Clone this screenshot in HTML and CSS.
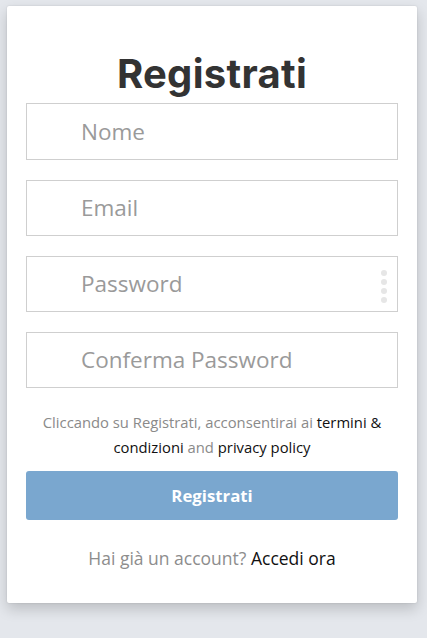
FILE: index.html
```html
<!DOCTYPE html>
<html lang="it">
<head>
<meta charset="utf-8">
<link rel="stylesheet" href="styles.css">
</head>
<body>
<div class="card">
  <h1 class="title">Registrati</h1>
  <form class="form">
    <div class="field"><input class="input" type="text" placeholder="Nome"></div>
    <div class="field"><input class="input" type="text" placeholder="Email"></div>
    <div class="field">
      <input class="input" type="password" placeholder="Password">
      <span class="dots"><i></i><i></i><i></i><i></i></span>
    </div>
    <div class="field"><input class="input" type="password" placeholder="Conferma Password"></div>
    <p class="terms">Cliccando su Registrati, acconsentirai ai <a href="#">termini &amp; condizioni</a> and <a href="#">privacy policy</a></p>
    <button class="btn" type="button">Registrati</button>
  </form>
  <p class="login">Hai già un account? <a href="#">Accedi ora</a></p>
</div>
</body>
</html>
```
FILE: styles.css
```css
* { box-sizing: border-box; }
html, body { margin: 0; padding: 0; }
body {
  background: #e4e7ec;
  font-family: "Open Sans", "Liberation Sans", sans-serif;
  padding: 6px 10px 0 7px;
  height: 638px;
}
.card {
  width: 410px;
  height: 597px;
  background: #fff;
  border-radius: 2px;
  box-shadow: 0 6px 14px rgba(0,0,0,0.18), 0 0 2px rgba(0,0,0,0.12);
  padding: 39px 19px 0 19px;
}
.title {
  margin: 0;
  text-align: center;
  font-family: "Inter", "Liberation Sans", sans-serif;
  font-weight: 700;
  font-size: 40px;
  line-height: 58px;
  color: #333;
  letter-spacing: 0.3px;
}
.form { display: flex; flex-direction: column; }
.field {
  position: relative;
  height: 57px;
  margin-bottom: 20px;
}
.field:nth-child(2), .field:nth-child(3), .field:nth-child(4) { height: 56px; }
.input {
  width: 100%;
  height: 100%;
  border: 1px solid #cfcfcf;
  border-radius: 0;
  padding: 0 0 1px 54px;
  font-family: "Open Sans", sans-serif;
  font-size: 22.5px;
  color: #333;
  outline: none;
  background: #fff;
}
.input::placeholder { color: #9a9a9a; }
.dots {
  position: absolute;
  right: 11px;
  top: 14px;
  display: flex;
  flex-direction: column;
  gap: 3px;
}
.dots i {
  display: block;
  width: 6px;
  height: 6px;
  border-radius: 50%;
  background: #e6e6e6;
}
.terms {
  margin: 2px 0 0;
  text-align: center;
  font-size: 14.8px;
  line-height: 25px;
  color: #8a8a8a;
  padding: 0 8px;
}
.terms a { color: #111; text-decoration: none; }
.btn {
  margin-top: 11px;
  height: 49px;
  border: none;
  border-radius: 3px;
  background: #7aa7cf;
  color: #fff;
  font-family: "Open Sans", sans-serif;
  font-weight: 700;
  font-size: 16.8px;
}
.login {
  margin: 26px 0 0;
  text-align: center;
  font-size: 17.5px;
  color: #8d8d8d;
}
.login a { color: #111; text-decoration: none; }
```
